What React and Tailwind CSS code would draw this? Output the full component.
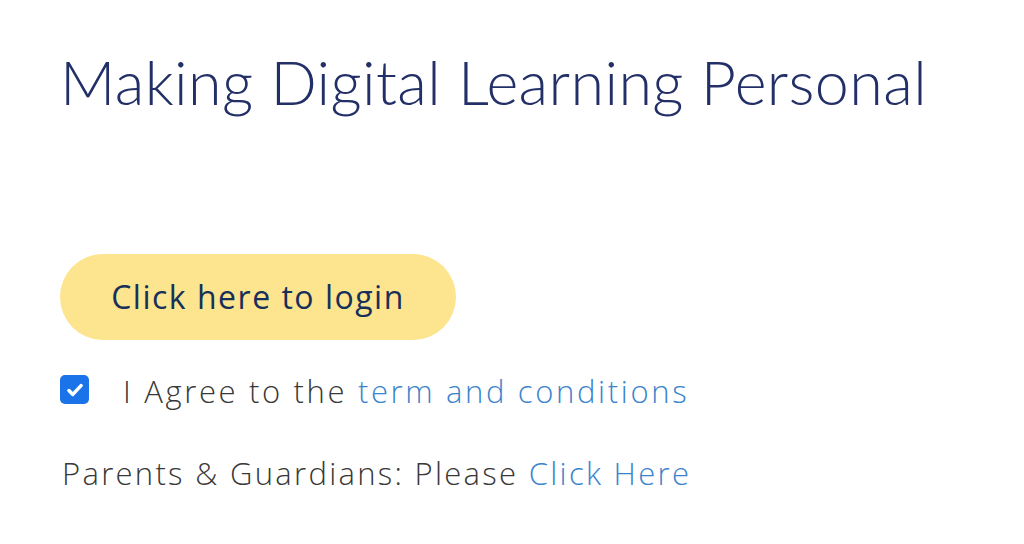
import { useState } from "react";

const App = () => {
	const [agreed, setAgreed] = useState(true);

	return (
		<div className="min-h-[544px] w-full bg-white pl-[62px] pt-[42px]" style={{ fontFamily: '"Open Sans", "Liberation Sans", sans-serif' }}>
			{/* Heading */}
			<h1
				className="-ml-[2px] text-[61px] leading-[80px] font-light text-[#233068] tracking-[0.4px]"
				style={{ fontFamily: 'Lato, "Open Sans", sans-serif' }}
			>
				Making Digital Learning Personal
			</h1>

			{/* Login button */}
			<button className="-ml-[2px] mt-[132px] flex h-[86px] w-[396px] items-center justify-center rounded-full bg-[#fde48f] text-[32px] font-medium tracking-[1.5px] text-[#17305a]">
				Click here to login
			</button>

			{/* Terms checkbox */}
			<label className="mt-[31px] -ml-[2px] flex items-start gap-[34px] text-[31px] leading-[40px] tracking-[2.65px] text-[#383838]">
				<span
					onClick={() => setAgreed(!agreed)}
					className={`mt-[4px] flex h-[29px] w-[29px] shrink-0 items-center justify-center rounded-[5px] ${agreed ? "bg-[#1a73e8]" : "border-2 border-gray-400 bg-white"}`}
				>
					{agreed && (
						<svg width="22" height="22" viewBox="0 0 20 20" fill="none">
							<path d="M4.5 10.5l3.5 3.5 7.5-8" stroke="white" strokeWidth="3.2" strokeLinecap="round" strokeLinejoin="round" />
						</svg>
					)}
				</span>
				<span className="font-light">
					I Agree to the <a className="text-[#3b84cc]">term and conditions</a>
				</span>
			</label>

			{/* Parents link */}
			<p className="mt-[42px] text-[31px] leading-[40px] font-light tracking-[2.3px] text-[#383838]">
				Parents &amp; Guardians: Please <a className="text-[#3b84cc]">Click Here</a>
			</p>
		</div>
	);
};

export default App;
